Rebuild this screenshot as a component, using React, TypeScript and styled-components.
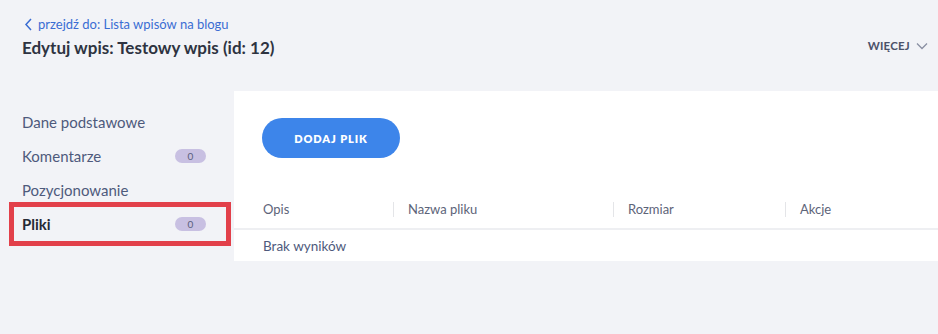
import React from "react";
import styled, { createGlobalStyle } from "styled-components";

const Global = createGlobalStyle`
  html, body { margin: 0; padding: 0; background: #f2f3f7; }
  body { font-family: Lato, "Noto Sans", sans-serif; -webkit-font-smoothing: antialiased; }
  * { box-sizing: border-box; }
`;

const Page = styled.div`
  width: 938px;
  height: 334px;
  background: #f2f3f7;
  display: flex;
  flex-direction: column;
`;

const Header = styled.header`
  height: 91px;
  padding: 16px 10px 0 22px;
  display: flex;
  align-items: flex-start;
  justify-content: space-between;
`;

const TitleBlock = styled.div`
  display: flex;
  flex-direction: column;
`;

const BackLink = styled.a`
  display: flex;
  align-items: center;
  gap: 5px;
  color: #3a6dd3;
  font-size: 13px;
  text-decoration: none;
  height: 16px;
  margin-left: 2px;
`;

const Title = styled.h1`
  margin: 4px 0 0 0;
  font-size: 17px;
  font-weight: 700;
  color: #2e3341;
  line-height: 24px;
`;

const More = styled.button`
  margin-top: 23px;
  background: none;
  border: 0;
  padding: 0;
  display: flex;
  align-items: center;
  gap: 6px;
  font-family: inherit;
  font-size: 11.5px;
  font-weight: 700;
  letter-spacing: 0.2px;
  color: #4b5169;
`;

const Body = styled.div`
  display: grid;
  grid-template-columns: 234px 1fr;
  align-items: start;
`;

const Sidebar = styled.nav`
  padding-top: 14px;
  display: flex;
  flex-direction: column;
`;

const NavItem = styled.div<{ $active?: boolean }>`
  height: 34px;
  width: 212px;
  margin-left: 14px;
  padding: 0 20px 0 8px;
  display: flex;
  align-items: center;
  justify-content: space-between;
  font-size: 15px;
  color: ${(p) => (p.$active ? "#262a35" : "#4e5a7c")};
  font-weight: ${(p) => (p.$active ? 700 : 400)};
  outline: ${(p) => (p.$active ? "5px solid #e2404a" : "none")};
`;

const Badge = styled.span`
  width: 31px;
  height: 14px;
  border-radius: 7px;
  background: #c8c0e2;
  color: #5a5f7d;
  font-size: 10px;
  font-weight: 400;
  display: flex;
  align-items: center;
  justify-content: center;
`;

const Panel = styled.section`
  background: #ffffff;
  padding-top: 27px;
  height: 170px;
`;

const AddButton = styled.button`
  margin-left: 28px;
  width: 138px;
  height: 40px;
  border-radius: 20px;
  border: 0;
  background: #3d85ea;
  color: #ffffff;
  font-family: inherit;
  font-size: 11px;
  font-weight: 800;
  letter-spacing: 0.9px;
`;

const Table = styled.div`
  margin-top: 32px;
`;

const HeadRow = styled.div`
  display: grid;
  grid-template-columns: 131px 220px 172px 1fr;
  padding-left: 28px;
  height: 40px;
  align-items: center;
  border-bottom: 2px solid #eeeff2;
`;

const HeadCell = styled.div<{ $sep?: boolean }>`
  font-size: 13px;
  color: #5d6479;
  padding-left: ${(p) => (p.$sep ? "14px" : "1px")};
  border-left: ${(p) => (p.$sep ? "1px solid #e4e5e8" : "none")};
  line-height: 15px;
`;

const Empty = styled.div`
  padding-left: 29px;
  height: 31px;
  display: flex;
  align-items: center;
  font-size: 13.5px;
  color: #4e5a7c;
`;

export default function App() {
  return (
    <Page>
      <Global />
      <Header>
        <TitleBlock>
          <BackLink href="#">
            <svg width="9" height="13" viewBox="0 0 9 13" fill="none">
              <path d="M7 1 L2 6.5 L7 12" stroke="#3a6dd3" strokeWidth="1.5" />
            </svg>
            przejdź do: Lista wpisów na blogu
          </BackLink>
          <Title>Edytuj wpis: Testowy wpis (id: 12)</Title>
        </TitleBlock>
        <More>
          WIĘCEJ
          <svg width="12" height="8" viewBox="0 0 12 8" fill="none">
            <path d="M1 1.5 L6 6.5 L11 1.5" stroke="#8a8fa3" strokeWidth="1.3" />
          </svg>
        </More>
      </Header>
      <Body>
        <Sidebar>
          <NavItem>Dane podstawowe</NavItem>
          <NavItem>
            Komentarze<Badge>0</Badge>
          </NavItem>
          <NavItem>Pozycjonowanie</NavItem>
          <NavItem $active>
            Pliki<Badge>0</Badge>
          </NavItem>
        </Sidebar>
        <Panel>
          <AddButton>DODAJ PLIK</AddButton>
          <Table>
            <HeadRow>
              <HeadCell>Opis</HeadCell>
              <HeadCell $sep>Nazwa pliku</HeadCell>
              <HeadCell $sep>Rozmiar</HeadCell>
              <HeadCell $sep>Akcje</HeadCell>
            </HeadRow>
            <Empty>Brak wyników</Empty>
          </Table>
        </Panel>
      </Body>
    </Page>
  );
}
